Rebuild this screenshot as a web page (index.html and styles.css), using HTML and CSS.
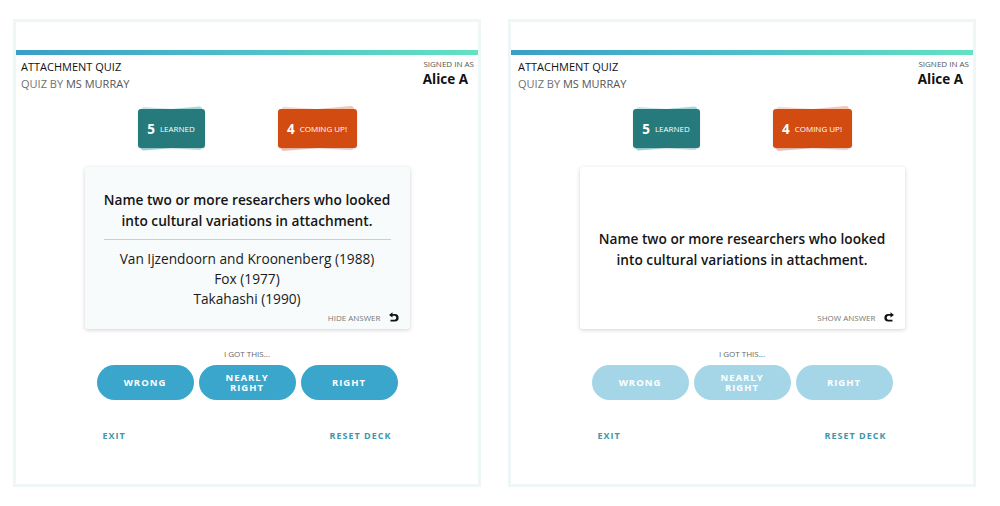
FILE: index.html
```html
<!DOCTYPE html>
<html lang="en">
<head>
<meta charset="utf-8">
<title>Attachment Quiz</title>
<link rel="stylesheet" href="styles.css">
</head>
<body>
<div class="panel">
  <div class="bar"></div>
  <div class="header">
    <div class="quiz-info">
      <div class="quiz-title">Attachment Quiz</div>
      <div class="quiz-by">Quiz by <span class="author">Ms Murray</span></div>
    </div>
    <div class="user">
      <div class="signed">Signed in as</div>
      <div class="user-name">Alice A</div>
    </div>
  </div>
  <div class="badges">
    <div class="badge badge-teal"><span class="num">5</span><span class="lbl">Learned</span></div>
    <div class="badge badge-orange"><span class="num">4</span><span class="lbl">Coming up!</span></div>
  </div>
  <div class="card card-answer">
    <div class="card-body">
      <div class="question">Name two or more researchers who looked<br>into cultural variations in attachment.</div>
      <div class="sep"></div>
      <div class="answer">Van Ijzendoorn and Kroonenberg (1988)<br>Fox (1977)<br>Takahashi (1990)</div>
    </div>
    <div class="toggle">
      <span>Hide answer</span>
      <svg class="ico" viewBox="0 0 12 12" width="10" height="10"><path d="M0 3.5 L4.2 0.3 V2.4 H7 A4.55 4.55 0 0 1 7 11.5 H1.8 V9.3 H7 A2.45 2.45 0 0 0 7 4.6 H4.2 V6.7 Z" fill="#111"/></svg>
    </div>
  </div>
  <div class="got">I got this...</div>
  <div class="buttons">
    <div class="btn">Wrong</div>
    <div class="btn btn-two"><span>Nearly</span><span>right</span></div>
    <div class="btn">Right</div>
  </div>
  <div class="footer">
    <span class="link">Exit</span>
    <span class="link">Reset deck</span>
  </div>
</div>

<div class="panel panel-right">
  <div class="bar"></div>
  <div class="header">
    <div class="quiz-info">
      <div class="quiz-title">Attachment Quiz</div>
      <div class="quiz-by">Quiz by <span class="author">Ms Murray</span></div>
    </div>
    <div class="user">
      <div class="signed">Signed in as</div>
      <div class="user-name">Alice A</div>
    </div>
  </div>
  <div class="badges">
    <div class="badge badge-teal"><span class="num">5</span><span class="lbl">Learned</span></div>
    <div class="badge badge-orange"><span class="num">4</span><span class="lbl">Coming up!</span></div>
  </div>
  <div class="card card-question">
    <div class="card-body">
      <div class="question">Name two or more researchers who looked<br>into cultural variations in attachment.</div>
    </div>
    <div class="toggle">
      <span>Show answer</span>
      <svg class="ico ico-flip" viewBox="0 0 12 12" width="10" height="10"><path d="M0 3.5 L4.2 0.3 V2.4 H7 A4.55 4.55 0 0 1 7 11.5 H1.8 V9.3 H7 A2.45 2.45 0 0 0 7 4.6 H4.2 V6.7 Z" fill="#111"/></svg>
    </div>
  </div>
  <div class="got">I got this...</div>
  <div class="buttons buttons-disabled">
    <div class="btn">Wrong</div>
    <div class="btn btn-two"><span>Nearly</span><span>right</span></div>
    <div class="btn">Right</div>
  </div>
  <div class="footer">
    <span class="link">Exit</span>
    <span class="link">Reset deck</span>
  </div>
</div>
</body>
</html>
```

FILE: styles.css
```css
* { box-sizing: border-box; }

body {
  margin: 0;
  padding: 19px 0 0 13px;
  background: #ffffff;
  font-family: "Open Sans", "Noto Sans", sans-serif;
  display: flex;
  gap: 27px;
  color: #222;
}

.panel {
  position: relative;
  z-index: 0;
  width: 468px;
  height: 468px;
  border: 3px solid #eef6f8;
  background: #fff;
  padding-top: 28px;
  display: flex;
  flex-direction: column;
  align-items: center;
}

.bar {
  align-self: stretch;
  height: 5px;
  background: linear-gradient(90deg, #3a9ec6 0%, #4cc0c9 50%, #62e2c2 100%);
}

.header {
  align-self: stretch;
  display: flex;
  justify-content: space-between;
  padding: 3px 4px 0 5px;
}

.panel-right .header { padding-left: 7px; }

.quiz-title {
  font-size: 11px;
  line-height: 17px;
  text-transform: uppercase;
  color: #111;
}

.quiz-by {
  font-size: 11px;
  line-height: 17px;
  text-transform: uppercase;
  color: #707070;
}

.author {
  color: #555;
  font-weight: 500;
}

.user {
  display: flex;
  flex-direction: column;
  align-items: flex-end;
}

.signed {
  font-size: 8px;
  line-height: 12px;
  text-transform: uppercase;
  color: #555;
}

.user-name {
  font-size: 13.5px;
  line-height: 19px;
  font-weight: 700;
  color: #111;
  margin-right: 6px;
}

.badges {
  display: flex;
  justify-content: center;
  gap: 73px;
  margin-top: 17px;
}

.badge {
  position: relative;
  height: 39px;
  border-radius: 3px;
  display: flex;
  align-items: center;
  justify-content: center;
  gap: 5px;
  color: #fff;
  box-shadow: 0 1px 2px rgba(0,0,0,0.12);
}

.badge::before,
.badge::after {
  content: "";
  position: absolute;
  inset: 0;
  border-radius: 3px;
  z-index: -1;
}

.badge::before { transform: rotate(-5deg) scaleX(0.96); }
.badge::after { transform: rotate(4deg) scaleX(0.94); }

.badge-teal {
  width: 67px;
  background: #277a7b;
}
.badge-teal::before { background: #a6d8db; }
.badge-teal::after { background: #c6e7e9; }

.badge-orange {
  width: 79px;
  background: #d24c12;
}
.badge-orange::before { background: #f6c6b4; }
.badge-orange::after { background: #f7dacd; }

.num {
  font-size: 13.5px;
  font-weight: 700;
  line-height: 16px;
}

.lbl {
  font-size: 8px;
  line-height: 12px;
  text-transform: uppercase;
}

.card {
  width: 325px;
  height: 162px;
  margin-top: 19px;
  border-radius: 3px;
  box-shadow: 0 1px 4px rgba(0,0,0,0.18);
  padding: 20px 11px 5px 19px;
  display: flex;
  flex-direction: column;
}

.card-answer { background: #f7fbfc; }
.card-question { background: #ffffff; }

.card-body {
  flex: 1;
  display: flex;
  flex-direction: column;
  justify-content: center;
  align-items: stretch;
  padding-right: 8px;
}

.question {
  font-size: 13.7px;
  line-height: 21px;
  font-weight: 600;
  text-align: center;
  color: #151515;
  white-space: nowrap;
}

.sep {
  height: 1px;
  background: #c9cfd2;
  margin: 8px 0 9px;
}

.answer {
  font-size: 13.7px;
  line-height: 20px;
  text-align: center;
  color: #1a1a1a;
  white-space: nowrap;
}

.toggle {
  display: flex;
  justify-content: flex-end;
  align-items: center;
  gap: 8px;
  height: 14px;
  font-size: 8px;
  text-transform: uppercase;
  color: #777;
}

.ico { display: block; }
.ico-flip { transform: scaleX(-1); }

.got {
  margin-top: 19px;
  font-size: 8px;
  line-height: 12px;
  text-transform: uppercase;
  color: #666;
}

.buttons {
  display: flex;
  gap: 5px;
  margin-top: 5px;
}

.btn {
  width: 97px;
  height: 35px;
  border-radius: 18px;
  background: #3aa6cc;
  color: #fff;
  font-size: 9.5px;
  line-height: 12px;
  font-weight: 700;
  letter-spacing: 1px;
  text-transform: uppercase;
  display: flex;
  flex-direction: column;
  align-items: center;
  justify-content: center;
  text-align: center;
}

.btn-two span { line-height: 10px; }

.buttons-disabled .btn { opacity: 0.45; }

.footer {
  width: 289px;
  margin-top: 30px;
  display: flex;
  justify-content: space-between;
}

.link {
  font-size: 9px;
  line-height: 12px;
  font-weight: 700;
  letter-spacing: 1px;
  text-transform: uppercase;
  color: #3d96aa;
}
```
